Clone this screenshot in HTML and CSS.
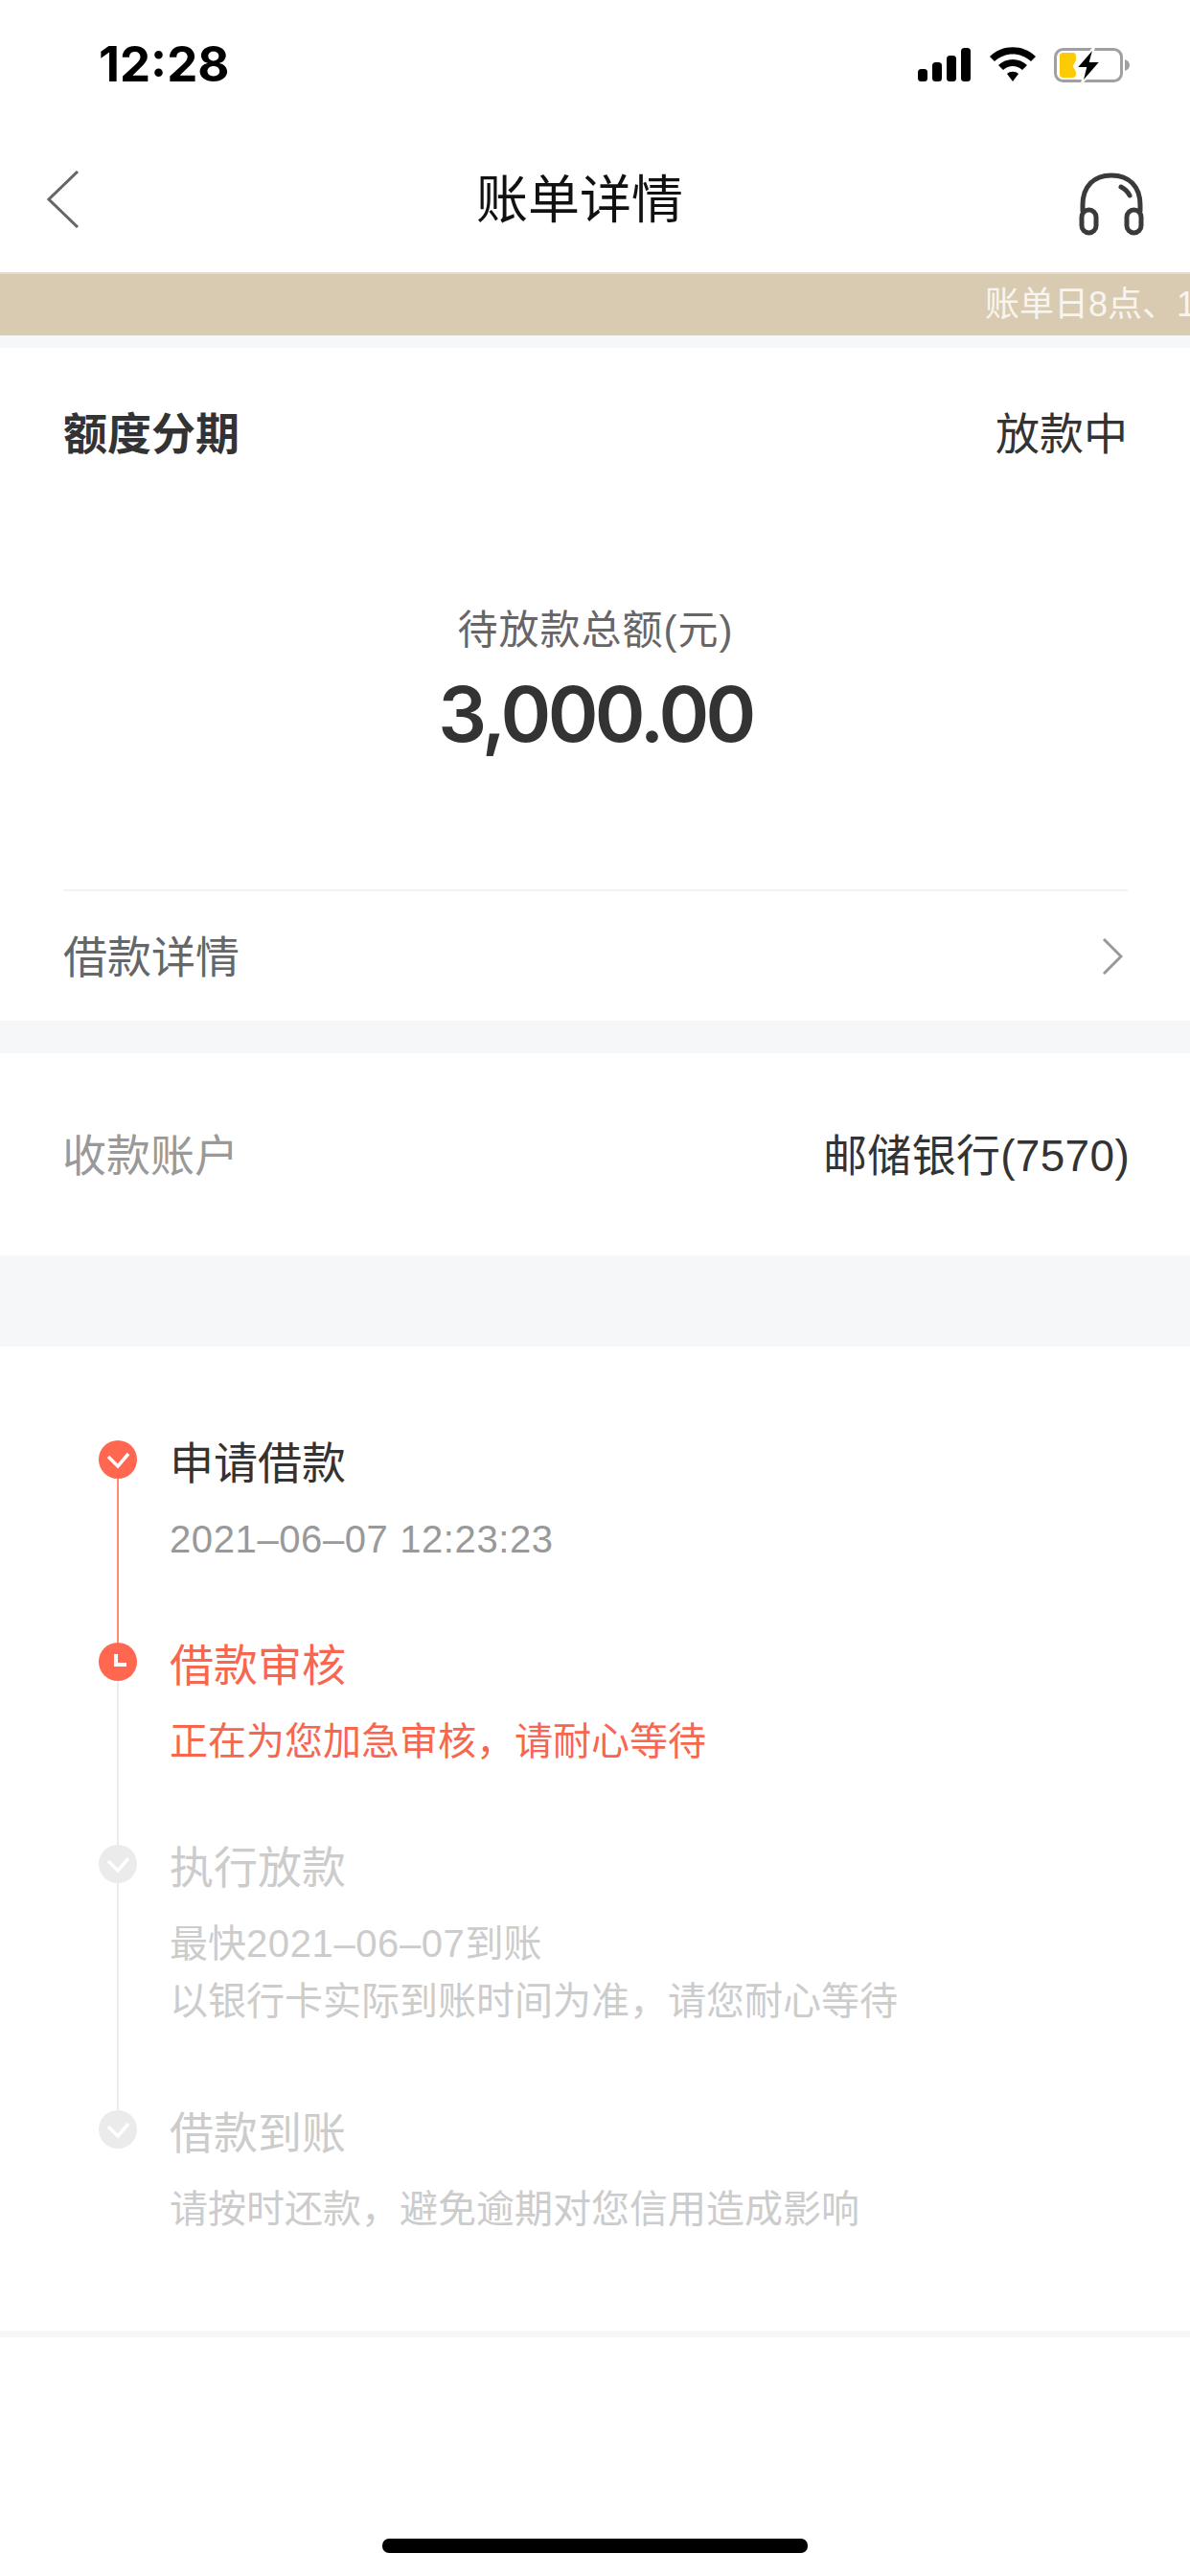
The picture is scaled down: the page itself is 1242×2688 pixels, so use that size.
FILE: index.html
```html
<!DOCTYPE html>
<html lang="zh-CN">
<head>
    <meta charset="UTF-8">
    <meta name="viewport" content="width=device-width, initial-scale=1.0">
    <title>账单详情</title>
    <link rel="stylesheet" href="styles.css">
</head>
<body>
    <div class="status-bar">
        <span class="clock">12:28</span>
        <div class="status-icons">
            <svg class="icon-signal" width="55" height="35" viewBox="0 0 55 35">
                <rect x="0" y="22" width="10" height="13" rx="3.5"/>
                <rect x="15" y="15" width="10" height="20" rx="3.5"/>
                <rect x="30" y="8" width="10" height="27" rx="3.5"/>
                <rect x="45" y="0" width="10" height="35" rx="3.5"/>
            </svg>
            <svg class="icon-wifi" width="48" height="36" viewBox="0 0 48 36">
                <path d="M0 10 C13 -3 35 -3 48 10 L43 15 C32 5 16 5 5 15 Z"/>
                <path d="M9 19 C17 11 31 11 39 19 L34 24 C28 18.500 20 18.500 14 24 Z"/>
                <path d="M18 28 C21 25 27 25 30 28 L24 36 Z"/>
            </svg>
            <svg class="icon-battery" width="80" height="38" viewBox="0 0 80 38">
                <rect x="1.500" y="2.500" width="69" height="33" rx="8" fill="none" stroke="#a0a0a0" stroke-width="3"/>
                <path d="M74 13 C77 14 79 16 79 19 C79 22 77 24 74 25 Z" fill="#a0a0a0"/>
                <path d="M10 6 H20 C23 6 23 9 23 13 C23 16 20 18 20 20 C20 22 23 24 23 27 C23 31 22 32 19 32 H10 C7 32 6 31 6 28 V10 C6 7 7 6 10 6 Z" fill="#fdcb05"/>
                <path d="M42 0 L23 22 H33 L29 38 L49 15 H38 Z" fill="#000" stroke="#fff" stroke-width="2"/>
            </svg>
        </div>
    </div>

    <div class="nav-bar">
        <svg class="nav-back" width="34" height="60" viewBox="0 0 34 60">
            <path d="M32 1 L2 30 L32 59" fill="none" stroke="#666" stroke-width="3"/>
        </svg>
        <h1 class="nav-title">账单详情</h1>
        <svg class="nav-service" width="68" height="66" viewBox="0 0 68 66" fill="none" stroke="#3a3a3a" stroke-width="5" stroke-linecap="round">
            <path d="M4 40 V34 C4 14 16 3 34 3 C52 3 64 14 64 34 V40"/>
            <path d="M44 15 C48 17 51 20 53 24"/>
            <rect x="3" y="39" width="15" height="24" rx="7.500"/>
            <rect x="50" y="39" width="15" height="24" rx="7.500"/>
        </svg>
    </div>

    <div class="notice">
        <span class="notice-text">账单日8点、12点、18点自动扣款</span>
    </div>

    <section class="card summary">
        <div class="summary-head">
            <span class="summary-type">额度分期</span>
            <span class="summary-state">放款中</span>
        </div>
        <div class="amount-block">
            <div class="amount-label">待放款总额(元)</div>
            <div class="amount-value">3,000.00</div>
        </div>
        <div class="detail-row">
            <span>借款详情</span>
            <svg width="22" height="38" viewBox="0 0 22 38">
                <path d="M2 1 L20 19 L2 37" fill="none" stroke="#999" stroke-width="3"/>
            </svg>
        </div>
    </section>

    <section class="card account">
        <span class="account-label">收款账户</span>
        <span class="account-value">邮储银行(7570)</span>
    </section>

    <section class="card timeline">
        <div class="step step-done">
            <div class="step-mark">
                <svg class="dot" width="40" height="40" viewBox="0 0 40 40">
                    <circle cx="20" cy="20" r="20" fill="#ff6750"/>
                    <path d="M10 17 L20 27 L31 14" fill="none" stroke="#fff" stroke-width="3.500"/>
                </svg>
                <div class="step-line"></div>
            </div>
            <div class="step-body">
                <div class="step-title">申请借款</div>
                <div class="step-sub"><span class="num">2021–06–07 12:23:23</span></div>
            </div>
        </div>
        <div class="step step-now">
            <div class="step-mark">
                <svg class="dot" width="40" height="40" viewBox="0 0 40 40">
                    <circle cx="20" cy="20" r="20" fill="#ff6750"/>
                    <path d="M18 12 V23 H29" fill="none" stroke="#fff" stroke-width="4"/>
                </svg>
                <div class="step-line"></div>
            </div>
            <div class="step-body">
                <div class="step-title">借款审核</div>
                <div class="step-sub">正在为您加急审核，请耐心等待</div>
            </div>
        </div>
        <div class="step step-todo step-long">
            <div class="step-mark">
                <svg class="dot" width="40" height="40" viewBox="0 0 40 40">
                    <circle cx="20" cy="20" r="20" fill="#ebebeb"/>
                    <path d="M10 17 L20 27 L31 14" fill="none" stroke="#fff" stroke-width="3.500"/>
                </svg>
                <div class="step-line"></div>
            </div>
            <div class="step-body">
                <div class="step-title">执行放款</div>
                <div class="step-sub">最快<span class="num">2021–06–07</span>到账<br>以银行卡实际到账时间为准，请您耐心等待</div>
            </div>
        </div>
        <div class="step step-todo step-last">
            <div class="step-mark">
                <svg class="dot" width="40" height="40" viewBox="0 0 40 40">
                    <circle cx="20" cy="20" r="20" fill="#ebebeb"/>
                    <path d="M10 17 L20 27 L31 14" fill="none" stroke="#fff" stroke-width="3.500"/>
                </svg>
            </div>
            <div class="step-body">
                <div class="step-title">借款到账</div>
                <div class="step-sub">请按时还款，避免逾期对您信用造成影响</div>
            </div>
        </div>
    </section>

    <div class="home-area">
        <div class="home-indicator"></div>
    </div>
</body>
</html>
```

FILE: styles.css
```css
* {
    box-sizing: border-box;
}
body {
    margin: 0;
    width: 1242px;
    height: 2688px;
    overflow: hidden;
    background-color: #f6f7f9;
    color: #333333;
    font-family: "Liberation Sans", "Noto Sans CJK SC", sans-serif;
}

/* status bar */
.status-bar {
    height: 122px;
    padding: 34px 62px 0 103px;
    display: flex;
    justify-content: space-between;
    align-items: flex-start;
    background-color: #ffffff;
}
.clock {
    font-family: "Inter", "Liberation Sans", sans-serif;
    font-size: 51px;
    font-weight: 700;
    line-height: 66px;
    color: #000000;
}
.status-icons {
    display: flex;
    align-items: flex-start;
    padding-top: 16px;
}
.icon-wifi {
    margin-left: 20px;
    margin-top: -1px;
}
.icon-battery {
    margin-left: 19px;
    margin-top: -1px;
}

/* nav */
.nav-bar {
    height: 162px;
    padding: 0 48px 0 49px;
    display: flex;
    align-items: center;
    justify-content: space-between;
    position: relative;
    background-color: #ffffff;
}
.nav-title {
    margin: 0;
    font-size: 54px;
    font-weight: 400;
    line-height: 70px;
    color: #111111;
    position: absolute;
    left: 497px;
    top: 52px;
}
.nav-back {
    margin-top: 10px;
}
.nav-service {
    margin-top: 19px;
}

/* scrolling notice, clipped by the window edge */
.notice {
    height: 66px;
    padding-left: 1028px;
    background-color: #d9cbb2;
    border-top: 2px solid #e4dccd;
    white-space: nowrap;
    overflow: hidden;
}
.notice-text {
    font-size: 36px;
    line-height: 64px;
    color: #f8f5ef;
}

.card {
    background-color: #ffffff;
}

/* summary */
.summary {
    margin-top: 13px;
    height: 702px;
    padding: 0 65px 0 66px;
}
.summary-head {
    height: 172px;
    display: flex;
    justify-content: space-between;
    align-items: center;
}
.summary-type {
    font-size: 46px;
    font-weight: 700;
}
.summary-state {
    font-size: 46px;
}
.amount-block {
    height: 395px;
    padding-top: 99px;
    text-align: center;
    border-bottom: 2px solid #f2f2f2;
}
.amount-label {
    font-size: 42px;
    line-height: 48px;
    letter-spacing: 1px;
    color: #666666;
}
.amount-value {
    margin-top: 13px;
    font-family: "Inter", "Liberation Sans", sans-serif;
    font-size: 80px;
    font-weight: 600;
    line-height: 100px;
    letter-spacing: -3.6px;
    color: #333333;
}
.detail-row {
    height: 135px;
    padding-bottom: 6px;
    display: flex;
    justify-content: space-between;
    align-items: center;
    font-size: 46px;
    color: #666666;
}
.detail-row svg {
    margin-top: 6px;
    margin-right: 5px;
}

/* account */
.account {
    margin-top: 34px;
    height: 211px;
    padding: 0 63px 6px 65px;
    display: flex;
    justify-content: space-between;
    align-items: center;
    font-size: 46px;
}
.account-label {
    color: #999999;
}
.account-value {
    letter-spacing: 0.3px;
}

/* timeline */
.timeline {
    margin-top: 95px;
    height: 1027px;
    padding: 98px 0 0 103px;
}
.step {
    display: flex;
}
.step-mark {
    width: 40px;
    flex-shrink: 0;
    display: flex;
    flex-direction: column;
    align-items: center;
}
.dot {
    display: block;
    flex-shrink: 0;
}
.step-line {
    width: 2px;
    flex-grow: 1;
    background-color: #ebebeb;
}
.step-done .step-line {
    background-color: #ff8a78;
}
.step-body {
    margin-left: 34px;
    padding-bottom: 78px;
}
.step-long .step-body {
    padding-bottom: 84px;
}
.step-title {
    font-size: 46px;
    line-height: 48px;
}
.step-sub {
    margin-top: 25px;
    font-size: 40px;
    line-height: 60px;
    color: #999999;
}
.num {
    letter-spacing: 0.6px;
}
.step-now .step-title,
.step-now .step-sub {
    color: #f9664f;
}
.step-todo .step-title,
.step-todo .step-sub {
    color: #cccccc;
}

/* bottom */
.home-area {
    margin-top: 7px;
    height: 249px;
    background-color: #ffffff;
    padding: 210px 0 0 399px;
}
.home-indicator {
    width: 444px;
    height: 15px;
    border-radius: 7px;
    background-color: #000000;
}
```
